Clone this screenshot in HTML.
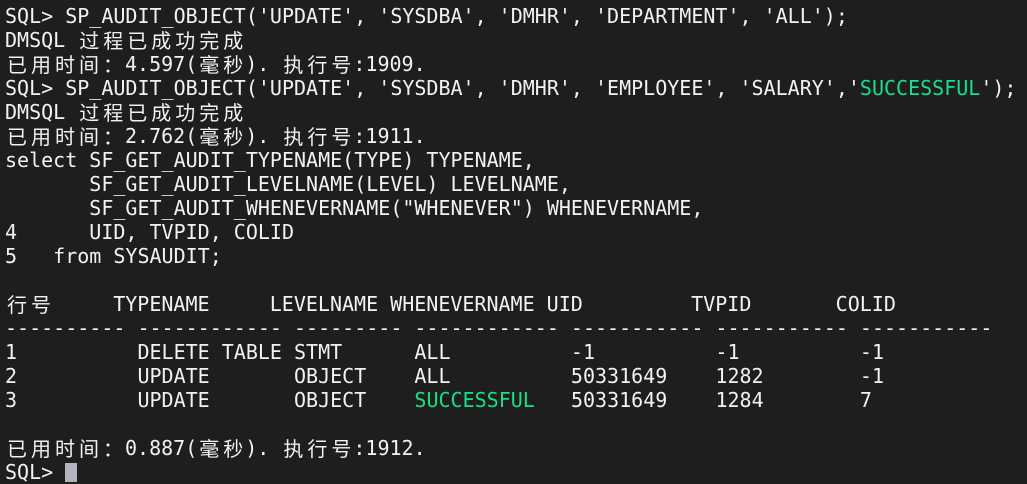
<!DOCTYPE html>
<html><head><meta charset="utf-8"><style>
html,body{margin:0;padding:0;background:#1e1e1e;width:1027px;height:482px;overflow:hidden}
#t{position:absolute;left:5px;top:4px;font-family:"DejaVu Sans Mono","Liberation Mono",monospace;font-size:20px;line-height:24px;color:#f2f2f2}
.l{height:24px;white-space:pre}
.c{display:inline-block;width:24px;text-align:center;font-family:"Noto Sans CJK SC","WenQuanYi Zen Hei",sans-serif;font-size:20px;line-height:24px;vertical-align:top}
.g{color:#16e08a}
.cur{display:inline-block;width:12px;height:19px;background:#b3b3bf;vertical-align:-3px}
</style></head><body><div id="t"><div class="l">SQL&gt; SP_AUDIT_OBJECT('UPDATE', 'SYSDBA', 'DMHR', 'DEPARTMENT', 'ALL');</div><div class="l">DMSQL <span class="c">过</span><span class="c">程</span><span class="c">已</span><span class="c">成</span><span class="c">功</span><span class="c">完</span><span class="c">成</span></div><div class="l"><span class="c">已</span><span class="c">用</span><span class="c">时</span><span class="c">间</span><span class="c">：</span>4.597(<span class="c">毫</span><span class="c">秒</span>). <span class="c">执</span><span class="c">行</span><span class="c">号</span>:1909.</div><div class="l">SQL&gt; SP_AUDIT_OBJECT('UPDATE', 'SYSDBA', 'DMHR', 'EMPLOYEE', 'SALARY','<span class="g">SUCCESSFUL</span>');</div><div class="l">DMSQL <span class="c">过</span><span class="c">程</span><span class="c">已</span><span class="c">成</span><span class="c">功</span><span class="c">完</span><span class="c">成</span></div><div class="l"><span class="c">已</span><span class="c">用</span><span class="c">时</span><span class="c">间</span><span class="c">：</span>2.762(<span class="c">毫</span><span class="c">秒</span>). <span class="c">执</span><span class="c">行</span><span class="c">号</span>:1911.</div><div class="l">select SF_GET_AUDIT_TYPENAME(TYPE) TYPENAME,</div><div class="l">       SF_GET_AUDIT_LEVELNAME(LEVEL) LEVELNAME,</div><div class="l">       SF_GET_AUDIT_WHENEVERNAME("WHENEVER") WHENEVERNAME,</div><div class="l">4      UID, TVPID, COLID</div><div class="l">5   from SYSAUDIT;</div><div class="l"> </div><div class="l"><span class="c">行</span><span class="c">号</span>     TYPENAME     LEVELNAME WHENEVERNAME UID         TVPID       COLID</div><div class="l">---------- ------------ --------- ------------ ----------- ----------- -----------</div><div class="l">1          DELETE TABLE STMT      ALL          -1          -1          -1</div><div class="l">2          UPDATE       OBJECT    ALL          50331649    1282        -1</div><div class="l">3          UPDATE       OBJECT    <span class="g">SUCCESSFUL</span>   50331649    1284        7</div><div class="l"> </div><div class="l"><span class="c">已</span><span class="c">用</span><span class="c">时</span><span class="c">间</span><span class="c">：</span>0.887(<span class="c">毫</span><span class="c">秒</span>). <span class="c">执</span><span class="c">行</span><span class="c">号</span>:1912.</div><div class="l">SQL&gt; <span class="cur"></span></div></div></body></html>
